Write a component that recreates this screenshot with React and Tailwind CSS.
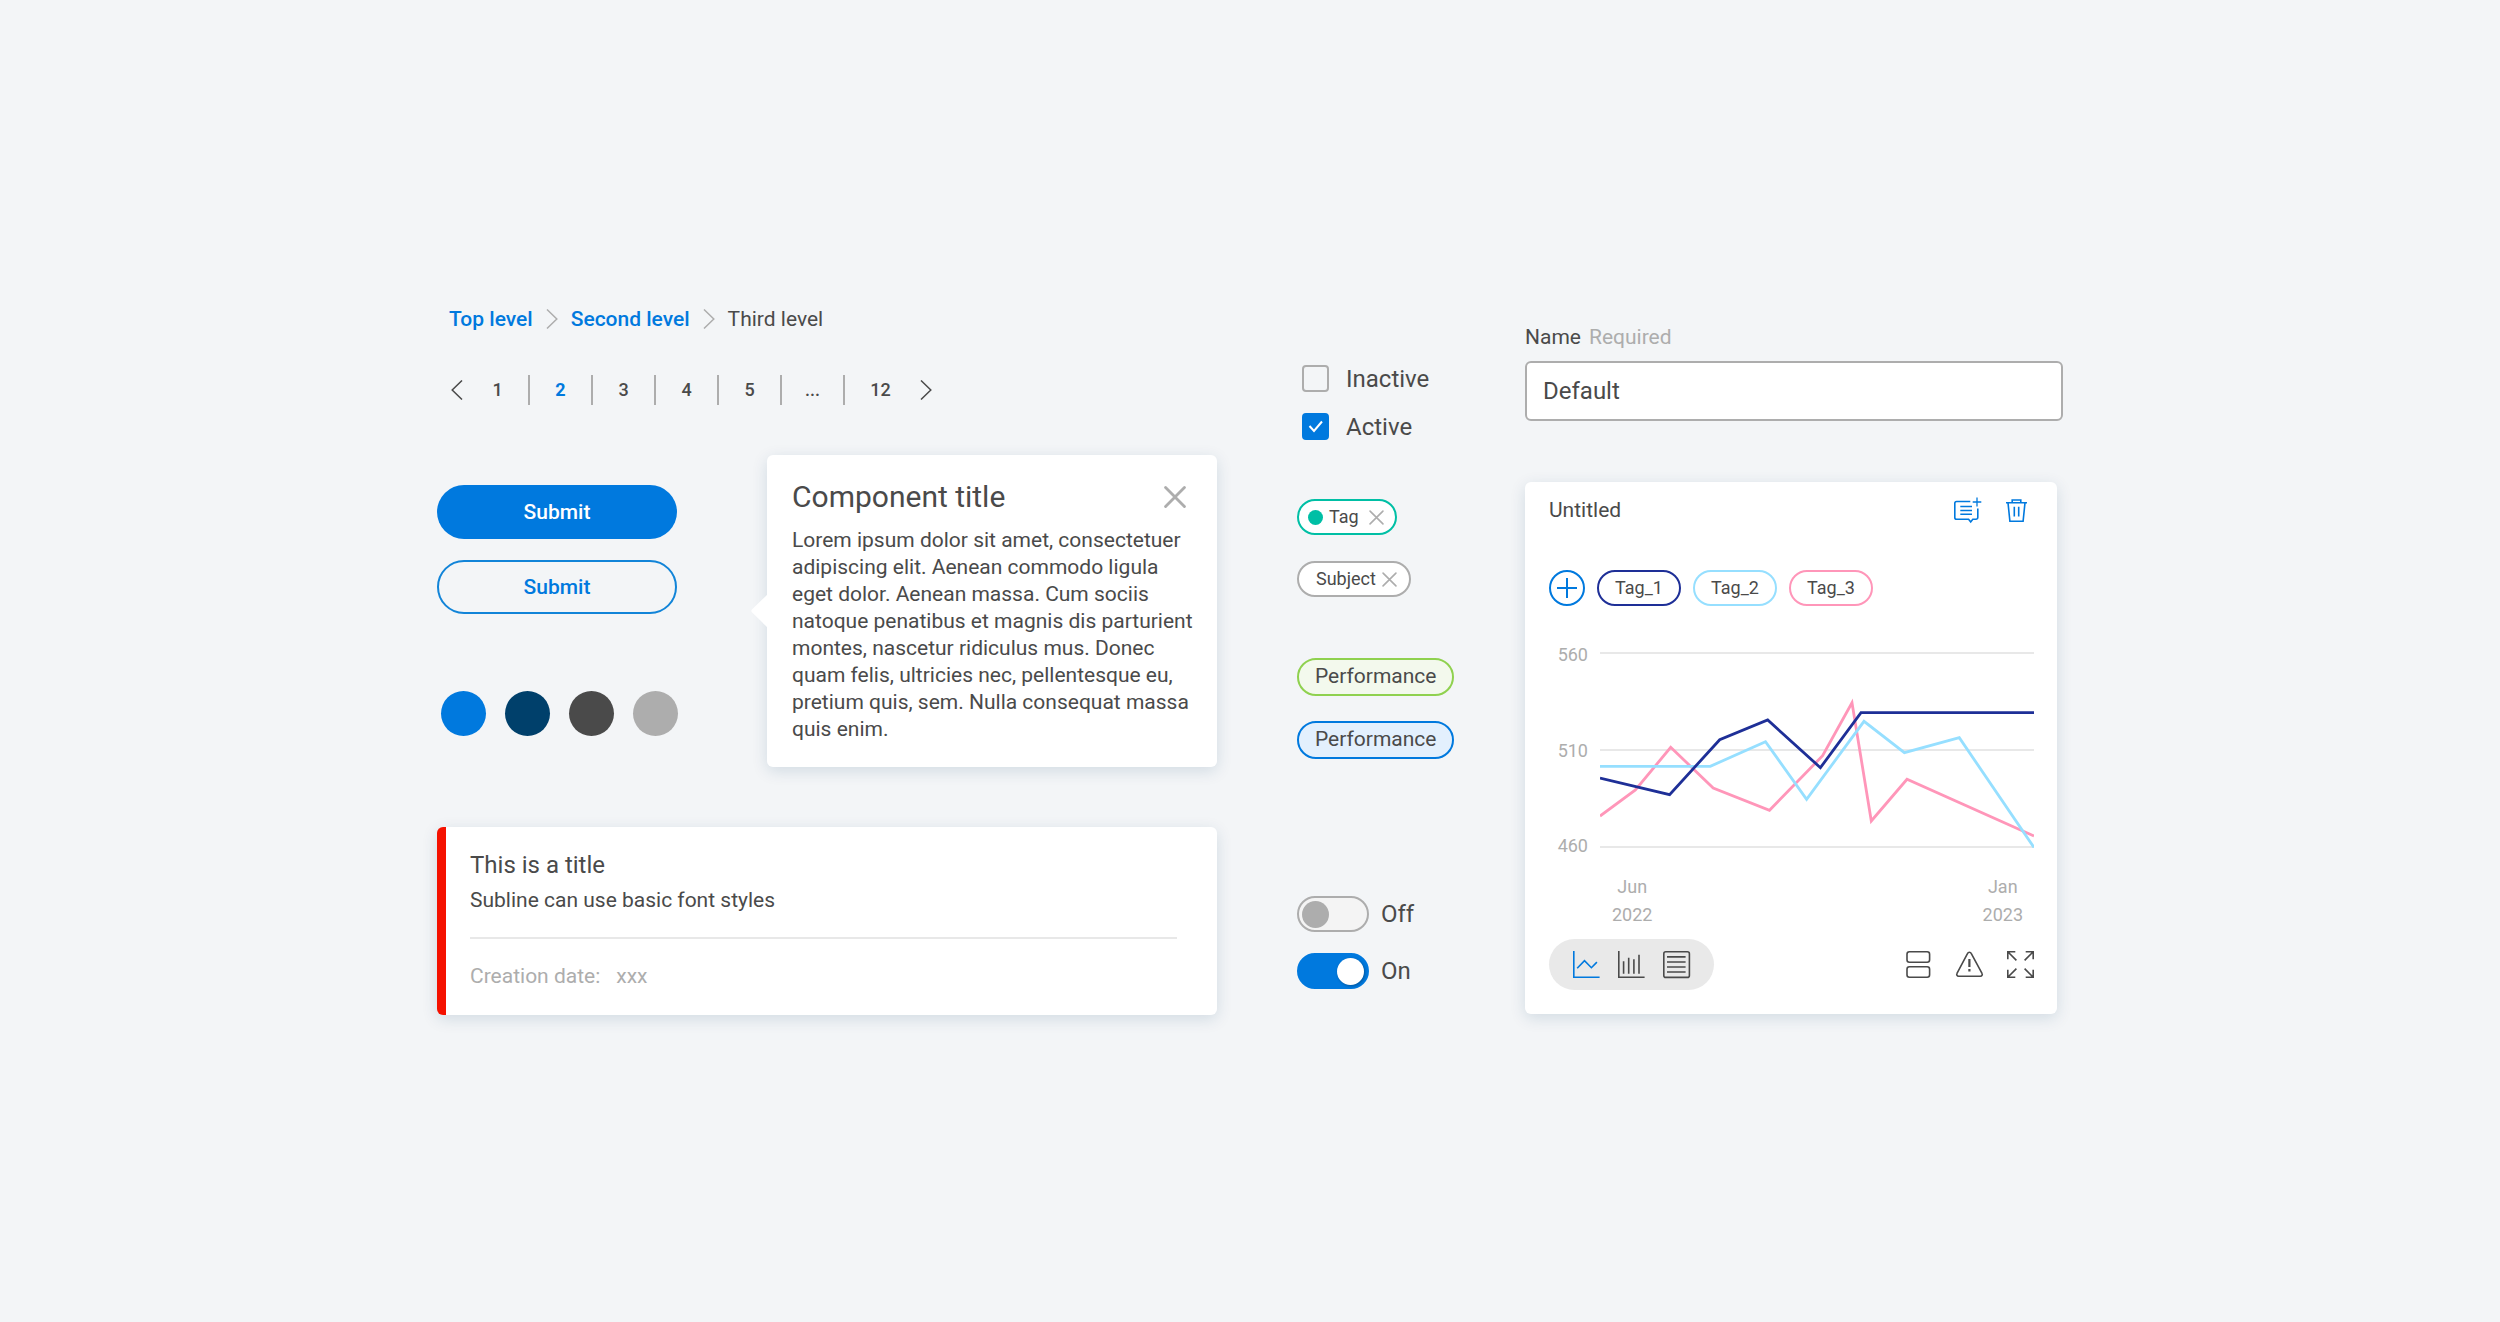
import { useState } from 'react';

const paragraph =
    'Lorem ipsum dolor sit amet, consectetuer adipiscing elit. Aenean commodo ligula eget dolor. Aenean massa. Cum sociis natoque penatibus et magnis dis parturient montes, nascetur ridiculus mus. Donec quam felis, ultricies nec, pellentesque eu, pretium quis, sem. Nulla consequat massa quis enim.';

const pages = ['1', '2', '3', '4', '5', '...', '12'];

const swatches = [
    { name: 'Blue', className: 'bg-[#0079de]' },
    { name: 'Navy', className: 'bg-[#00406b]' },
    { name: 'Dark gray', className: 'bg-[#4a4a4a]' },
    { name: 'Light gray', className: 'bg-[#adadad]' },
];

const chartTags = [
    { label: 'Tag_1', className: 'border-[#1e2f97]' },
    { label: 'Tag_2', className: 'border-[#96dfff]' },
    { label: 'Tag_3', className: 'border-[#ff96b9]' },
];

const series = [
    {
        color: '#ff96b9',
        points: '0,164 35.4,138 70.7,95.3 113.2,136 169.5,158.3 222.6,103.7 252,50.7 271.3,169 307,127.3 434,184',
    },
    {
        color: '#96dfff',
        points: '0,114.3 110.3,114.3 165.5,89.7 206.6,147.3 264,69.3 304.4,100.7 359.3,85.7 434,195.5',
    },
    {
        color: '#1e2f97',
        points: '0,126 69.6,142.7 119.7,87.7 167.7,68 220.4,115.7 261,60.7 434,60.7',
    },
];

const cardShadow = 'shadow-[0_4px_16px_rgba(0,64,107,0.14)]';

function Chevron({ className, flip = false }) {
    return (
        <svg
            viewBox="0 0 12 20"
            className={`h-5 w-3 ${className}`}
            fill="none"
            stroke="currentColor"
            strokeWidth="1.5"
            aria-hidden="true"
        >
            <path d={flip ? 'M11 0.5 1.2 10l9.8 9.5' : 'M1 0.5 10.8 10 1 19.5'} />
        </svg>
    );
}

function Cross({ className, strokeWidth = 1.5 }) {
    return (
        <svg
            viewBox="0 0 14 14"
            className={className}
            fill="none"
            stroke="#adadad"
            strokeWidth={strokeWidth}
            strokeLinecap="round"
            aria-hidden="true"
        >
            <path d="M1 1l12 12M13 1 1 13" />
        </svg>
    );
}

function Icon({ children, className = '' }) {
    return (
        <svg
            viewBox="0 0 27 27"
            className={`size-[27px] overflow-visible ${className}`}
            fill="none"
            stroke="currentColor"
            strokeWidth="1.6"
            aria-hidden="true"
        >
            {children}
        </svg>
    );
}

function IconButton({ label, children, className = '' }) {
    return (
        <button type="button" aria-label={label} className={`block ${className}`}>
            <Icon>{children}</Icon>
        </button>
    );
}

function Breadcrumbs() {
    return (
        <nav
            aria-label="Breadcrumb"
            className="flex h-6 items-center gap-[13px] pl-3 text-[21px] leading-6"
        >
            <a href="#top" className="font-medium text-[#0079de]">
                Top level
            </a>
            <Chevron className="text-[#adadad]" />
            <a href="#second" className="font-medium text-[#0079de]">
                Second level
            </a>
            <Chevron className="text-[#adadad]" />
            <span>Third level</span>
        </nav>
    );
}

function Pagination() {
    const [current, setCurrent] = useState('2');

    return (
        <nav
            aria-label="Pagination"
            className="mt-11 flex h-[30px] items-center pl-[14px] text-lg font-medium"
        >
            <button type="button" aria-label="Previous page">
                <Chevron flip />
            </button>
            <ul className="ml-1 flex">
                {pages.map((page) => (
                    <li
                        key={page}
                        className="border-r-2 border-[#adadad] last:border-r-0 last:px-[5px]"
                    >
                        <button
                            type="button"
                            onClick={() => setCurrent(page)}
                            className={`h-[30px] min-w-[61px] leading-[30px] ${
                                page === current ? 'font-bold text-[#0079de]' : ''
                            }`}
                        >
                            {page}
                        </button>
                    </li>
                ))}
            </ul>
            <button type="button" aria-label="Next page" className="ml-1">
                <Chevron />
            </button>
        </nav>
    );
}

function Actions() {
    return (
        <div className="w-[241px] pt-[30px]">
            <button
                type="button"
                className="block h-[54px] w-60 rounded-full bg-[#0079de] pt-px text-[21px] font-medium text-white"
            >
                Submit
            </button>
            <button
                type="button"
                className="mt-[21px] block h-[54px] w-60 rounded-full border-2 border-[#1184d8] pt-px text-[21px] font-medium text-[#0079de]"
            >
                Submit
            </button>
            <ul className="mt-[77px] flex justify-between pl-1">
                {swatches.map((swatch) => (
                    <li
                        key={swatch.name}
                        aria-label={swatch.name}
                        className={`size-[45px] rounded-full ${swatch.className}`}
                    />
                ))}
            </ul>
        </div>
    );
}

function Popover() {
    return (
        <section
            className={`relative w-[450px] rounded-md bg-white pt-6 pr-5 pl-[25px] ${cardShadow}`}
        >
            <svg
                viewBox="0 0 16 34"
                className="absolute top-[139px] -left-4 h-[34px] w-4 overflow-visible"
                fill="#fff"
                aria-hidden="true"
            >
                <path d="M17 0 1.2 15.2a2.4 2.4 0 0 0 0 3.4L17 34z" />
            </svg>
            <div className="flex h-9 items-center justify-between">
                <h2 className="text-3xl">Component title</h2>
                <button type="button" aria-label="Close" className="mr-[11px]">
                    <Cross className="size-[22px]" strokeWidth={1.8} />
                </button>
            </div>
            <p className="mt-3 pb-6 text-[21px] leading-[27px]">{paragraph}</p>
        </section>
    );
}

function InfoCard() {
    return (
        <article
            className={`mt-[60px] overflow-hidden rounded-md border-l-9 border-[#f51100] bg-white pt-[22px] pr-10 pb-[23px] pl-6 ${cardShadow}`}
        >
            <h2 className="text-2xl leading-8">This is a title</h2>
            <p className="mt-[3px] text-[21px] leading-8">
                Subline can use basic font styles
            </p>
            <hr className="mt-[21px] border-t-2 border-[#e8e8e8]" />
            <p className="mt-[21px] flex gap-4 text-[21px] leading-8 text-[#adadad]">
                <span>Creation date:</span>
                <span>xxx</span>
            </p>
        </article>
    );
}

function Checkbox({ label, defaultChecked }) {
    return (
        <label className="flex h-[27px] items-center gap-[17px] pl-[5px] text-2xl">
            <span className="relative block size-[27px]">
                <input
                    type="checkbox"
                    defaultChecked={defaultChecked}
                    className="peer block size-[27px] appearance-none rounded-sm border-2 border-[#adadad] checked:border-[#0079de] checked:bg-[#0079de]"
                />
                <svg
                    viewBox="0 0 27 27"
                    className="pointer-events-none absolute inset-0 opacity-0 peer-checked:opacity-100"
                    fill="none"
                    stroke="#fff"
                    strokeWidth="2"
                    aria-hidden="true"
                >
                    <path d="M7.5 13 12 18l8-9.5" />
                </svg>
            </span>
            {label}
        </label>
    );
}

function Toggle({ label, defaultChecked }) {
    return (
        <label className="flex items-center gap-3 text-2xl">
            <span className="relative block h-9 w-[72px]">
                <input
                    type="checkbox"
                    role="switch"
                    defaultChecked={defaultChecked}
                    className="peer block h-9 w-[72px] appearance-none rounded-full border-2 border-[#adadad] bg-[#f4f4f4] checked:border-[#0079de] checked:bg-[#0079de]"
                />
                <span className="pointer-events-none absolute top-[5px] left-[5px] size-[27px] rounded-full bg-[#adadad] peer-checked:left-10 peer-checked:bg-white peer-checked:shadow-[1px_1px_3px_rgba(0,0,0,0.3)]" />
            </span>
            {label}
        </label>
    );
}

function Controls() {
    return (
        <div className="flex flex-col items-start pt-[58px]">
            <div className="flex flex-col gap-[21px]">
                <Checkbox label="Inactive" />
                <Checkbox label="Active" defaultChecked />
            </div>

            <span className="mt-[59px] flex h-9 items-center rounded-full border-2 border-[#00bfa5] bg-white pr-[11px] pl-[9px] text-lg">
                <span className="size-[15px] rounded-full bg-[#00bfa5]" />
                <span className="ml-[6px]">Tag</span>
                <button type="button" aria-label="Remove Tag" className="ml-[10px]">
                    <Cross className="size-[15px]" />
                </button>
            </span>
            <span className="mt-[26px] flex h-9 items-center rounded-full border-2 border-[#adadad] bg-white pr-3 pl-[17px] text-lg">
                Subject
                <button type="button" aria-label="Remove Subject" className="ml-[6px]">
                    <Cross className="size-[15px]" />
                </button>
            </span>

            <span className="mt-[61px] flex h-[38px] items-center rounded-full border-2 border-[#8fd14f] bg-[#f3f9ed] px-4 text-[21px]">
                Performance
            </span>
            <span className="mt-[25px] flex h-[38px] items-center rounded-full border-2 border-[#0079de] bg-[#e3f0fd] px-4 text-[21px]">
                Performance
            </span>

            <div className="mt-[137px] flex flex-col gap-[21px]">
                <Toggle label="Off" />
                <Toggle label="On" defaultChecked />
            </div>
        </div>
    );
}

function NameField() {
    return (
        <div>
            <label htmlFor="name" className="flex gap-2 text-[21px] leading-6">
                Name
                <span className="text-[#adadad]">Required</span>
            </label>
            <input
                id="name"
                name="name"
                type="text"
                defaultValue="Default"
                className="mt-3 block h-[60px] w-full rounded-md border-2 border-[#adadad] bg-white px-4 text-2xl"
            />
        </div>
    );
}

function LineChart() {
    return (
        <figure>
            <div className="mt-[37px] flex gap-3 text-lg leading-6 text-[#adadad]">
                <div className="flex w-[39px] flex-col justify-between text-right">
                    <span>560</span>
                    <span>510</span>
                    <span>460</span>
                </div>
                <div className="flex-1 pt-[9px] pb-[10px]">
                    <svg
                        viewBox="0 0 434 196"
                        className="block w-full"
                        fill="none"
                        role="img"
                        aria-label="Line chart"
                    >
                        <path
                            d="M0 1h434M0 98h434M0 195h434"
                            stroke="#e8e8e8"
                            strokeWidth="2"
                        />
                        {series.map((line) => (
                            <polyline
                                key={line.color}
                                points={line.points}
                                stroke={line.color}
                                strokeWidth="2.8"
                            />
                        ))}
                    </svg>
                </div>
            </div>
            <figcaption className="mt-[15px] flex justify-between pr-[11px] pl-[63px] text-center text-lg leading-7 text-[#adadad]">
                <span>
                    Jun
                    <br />
                    2022
                </span>
                <span>
                    Jan
                    <br />
                    2023
                </span>
            </figcaption>
        </figure>
    );
}

function ChartCard() {
    return (
        <section
            className={`mt-[61px] mr-[6px] rounded-md bg-white pt-[15px] pr-[23px] pb-6 pl-6 ${cardShadow}`}
        >
            <header className="flex h-[27px] items-center justify-between pr-1">
                <h2 className="text-[21px]">Untitled</h2>
                <div className="flex gap-[22px] text-[#0079de]">
                    <IconButton label="Add note">
                        <path d="M16.3 4.5H2.6a1.8 1.8 0 0 0-1.8 1.8v14.2a1.8 1.8 0 0 0 1.8 1.8h12l2.1 2.6 2.1-2.6H22a1.8 1.8 0 0 0 1.8-1.8v-9" />
                        <path d="M6.3 9.5H18M6.3 13.5H18M6.3 17.3H18" />
                        <path d="M18.7 5h8.6M23 0.5v9" strokeWidth="1.3" />
                    </IconButton>
                    <IconButton label="Delete">
                        <path d="M3 5.7h21M9.2 5.7V3h8.6v2.7" />
                        <path d="M5 5.7l1.9 18.6h13.2L22 5.7" />
                        <path d="M11.3 9.8v9.7M15.7 9.8v9.7" />
                    </IconButton>
                </div>
            </header>

            <div className="mt-[46px] flex gap-3">
                <button
                    type="button"
                    aria-label="Add tag"
                    className="flex size-9 items-center justify-center rounded-full border-2 border-[#0079de] text-[#0079de]"
                >
                    <svg
                        viewBox="0 0 20 20"
                        className="size-5"
                        stroke="currentColor"
                        strokeWidth="2"
                        aria-hidden="true"
                    >
                        <path d="M10 0v20M0 10h20" />
                    </svg>
                </button>
                {chartTags.map((tag) => (
                    <button
                        key={tag.label}
                        type="button"
                        className={`h-9 w-[84px] rounded-full border-2 text-lg ${tag.className}`}
                    >
                        {tag.label}
                    </button>
                ))}
            </div>

            <LineChart />

            <footer className="mt-[10px] flex items-center justify-between">
                <div className="flex h-[51px] items-center gap-[18px] rounded-full bg-[#e9e9e9] px-6">
                    <IconButton label="Line view" className="text-[#0079de]">
                        <path d="M0.8 0v26.2h25.8" />
                        <path d="M4.2 17.3l7.3-7.6 6.9 7 5.5-5.6" />
                    </IconButton>
                    <IconButton label="Bar view">
                        <path d="M0.8 0v26.2h25.8" />
                        <path d="M5.6 10.3v12.4M10.7 6.7v16M15.9 8.3v14.4M21 3.7v19" />
                    </IconButton>
                    <IconButton label="List view">
                        <rect x="0.8" y="0.8" width="25.6" height="25.6" rx="2" />
                        <path d="M4 5.9h18.6M4 11h18.6M4 16h18.6M4 21h18.6" />
                    </IconButton>
                </div>
                <div className="flex gap-6">
                    <IconButton label="Split rows">
                        <rect x="2" y="0.8" width="22.6" height="10.4" rx="2.4" />
                        <rect x="2" y="15.8" width="22.6" height="10.4" rx="2.4" />
                    </IconButton>
                    <IconButton label="Warnings">
                        <path d="M11.6 2.4 1 22.3a1.9 1.9 0 0 0 1.7 2.9h21.6a1.9 1.9 0 0 0 1.7-2.9L15.2 2.4a2 2 0 0 0-3.6 0z" />
                        <path d="M13.4 8v8M13.4 18v2.6" strokeWidth="2.2" />
                    </IconButton>
                    <IconButton label="Full screen">
                        <path d="M0.8 8.3V0.8h7.5M0.8 0.8 9.4 9.4" />
                        <path d="M18.7 0.8h7.5v7.5M26.2 0.8l-8.6 8.6" />
                        <path d="M0.8 18.7v7.5h7.5M0.8 26.2l8.6-8.6" />
                        <path d="M18.7 26.2h7.5v-7.5M26.2 26.2l-8.6-8.6" />
                    </IconButton>
                </div>
            </footer>
        </section>
    );
}

export default function App() {
    return (
        <main className="flex min-h-screen items-center justify-center bg-[#f3f5f7] font-[Roboto,sans-serif] text-[#4a4a4a]">
            <div className="grid w-full max-w-[1626px] grid-cols-[790fr_158fr_538fr] gap-x-[70px]">
                <div className="pr-[10px]">
                    <Breadcrumbs />
                    <Pagination />
                    <div className="mt-[50px] flex justify-between">
                        <Actions />
                        <Popover />
                    </div>
                    <InfoCard />
                </div>
                <Controls />
                <div className="pt-[18px]">
                    <NameField />
                    <ChartCard />
                </div>
            </div>
        </main>
    );
}
